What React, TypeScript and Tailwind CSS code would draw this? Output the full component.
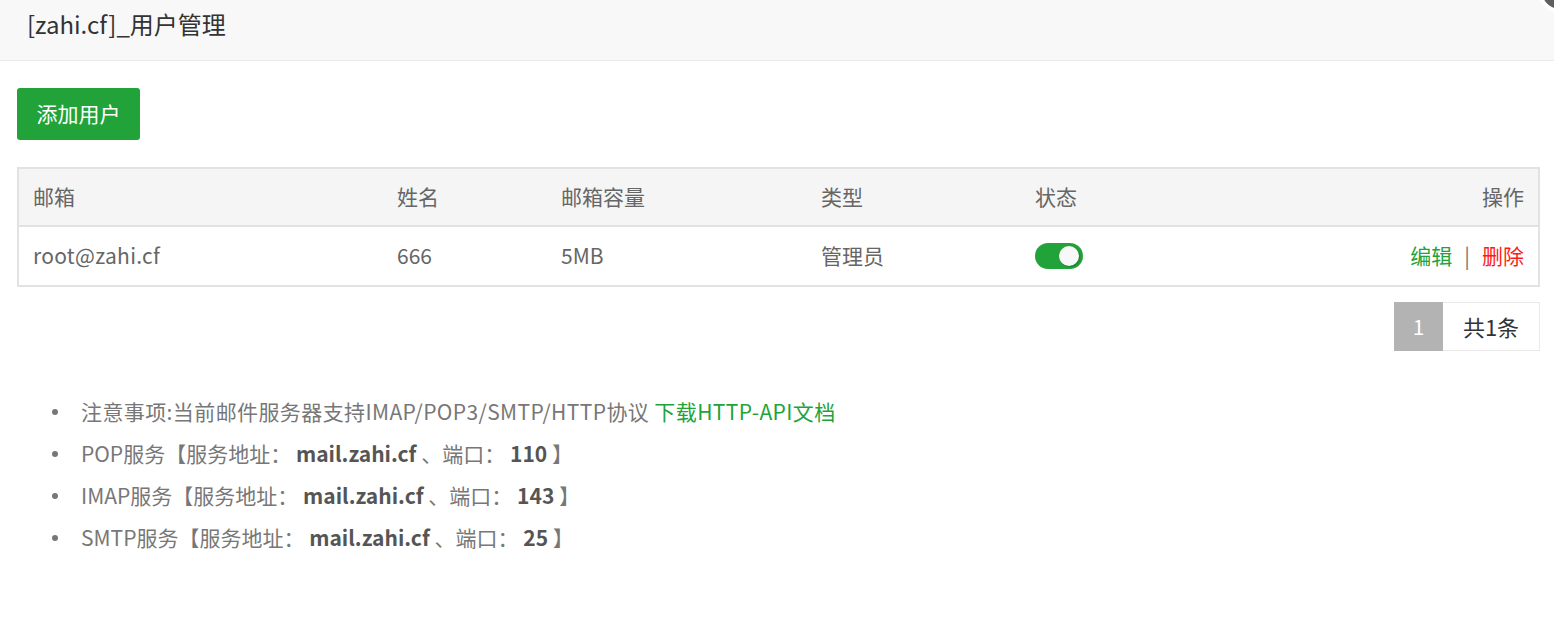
import React from 'react';

const font = { fontFamily: '"Noto Sans CJK SC", "Noto Sans", sans-serif' };

const Toggle = ({ on = true }: { on?: boolean }) => (
    <div className={`relative w-[48px] h-[26px] rounded-full ${on ? 'bg-[#22a33a]' : 'bg-[#d2d2d2]'}`}>
        <div className="absolute top-[3px] right-[4px] w-[20px] h-[20px] rounded-full bg-[#f8f8f8] shadow-[1px_1px_2px_rgba(0,0,0,0.25)]" />
    </div>
);

const Bullet = ({ children, className = "" }: { children: React.ReactNode, className?: string }) => (
    <li className={`flex items-center h-[42px] ${className}`}>
        <span className="w-[6px] h-[6px] rounded-full bg-[#777] ml-[35px] mr-[23px] shrink-0" />
        <span>{children}</span>
    </li>
);

const ServiceLine = ({ name, port }: { name: string, port: string }) => (
    <Bullet>
        {name}服务【服务地址：<b className="font-bold text-[#555]"> mail.zahi.cf </b>、端口：<b className="font-bold text-[#555]"> {port} </b>】
    </Bullet>
);

export default function App() {
    return (
        <div className="relative w-full h-[641px] overflow-hidden bg-white text-[#666]" style={font}>
            <div className="absolute left-[1538px] top-[-31px] w-[44px] h-[44px] rounded-full bg-[#5f5f5f] border-[4px] border-white" />

            <div className="h-[61px] bg-[#f8f8f8] border-b border-[#eaeaea] flex items-center pl-[27px] pb-[13px] text-[24px] text-[#333]">
                [zahi.cf]_用户管理
            </div>

            <div className="pl-[17px] pr-[14px] pt-[27px]">
                <button className="h-[52px] w-[123px] rounded-[3px] bg-[#22a33a] text-white text-[21px]">
                    添加用户
                </button>

                <div className="mt-[27px] border-2 border-[#e2e2e2] text-[21px]">
                    <div className="grid grid-cols-[363px_164px_260px_214px_1fr] h-[58px] items-center bg-[#f5f5f5] border-b-2 border-[#e2e2e2]">
                        <div className="pl-[14px]">邮箱</div>
                        <div className="pl-[15px]">姓名</div>
                        <div className="pl-[15px]">邮箱容量</div>
                        <div className="pl-[15px]">类型</div>
                        <div className="pl-[15px] pr-[14px] flex items-center justify-between">
                            <span>状态</span>
                            <span>操作</span>
                        </div>
                    </div>
                    <div className="grid grid-cols-[363px_164px_260px_214px_1fr] h-[58px] items-center">
                        <div className="pl-[14px] tracking-[0.3px]">root@zahi.cf</div>
                        <div className="pl-[15px]">666</div>
                        <div className="pl-[15px]">5MB</div>
                        <div className="pl-[15px]">管理员</div>
                        <div className="pl-[15px] pr-[14px] flex items-center justify-between">
                            <Toggle />
                            <span className="flex items-center gap-[12px]">
                                <span className="text-[#22a33a]">编辑</span>
                                <span className="text-[#777]">|</span>
                                <span className="text-[#ff1a1a]">删除</span>
                            </span>
                        </div>
                    </div>
                </div>

                <div className="mt-[15px] flex justify-end">
                    <div className="w-[49px] h-[49px] bg-[#b3b3b3] text-white text-[21px] flex items-center justify-center">1</div>
                    <div className="w-[97px] h-[49px] border border-l-0 border-[#e9e9e9] text-[#333] text-[22px] flex items-center justify-center">共1条</div>
                </div>

                <ul className="mt-[40px] text-[21px] text-[#777]">
                    <Bullet className="tracking-[0.4px]">
                        注意事项:当前邮件服务器支持IMAP/POP3/SMTP/HTTP协议 <span className="text-[#22a33a]">下载HTTP-API文档</span>
                    </Bullet>
                    <ServiceLine name="POP" port="110" />
                    <ServiceLine name="IMAP" port="143" />
                    <ServiceLine name="SMTP" port="25" />
                </ul>
            </div>
        </div>
    );
}
